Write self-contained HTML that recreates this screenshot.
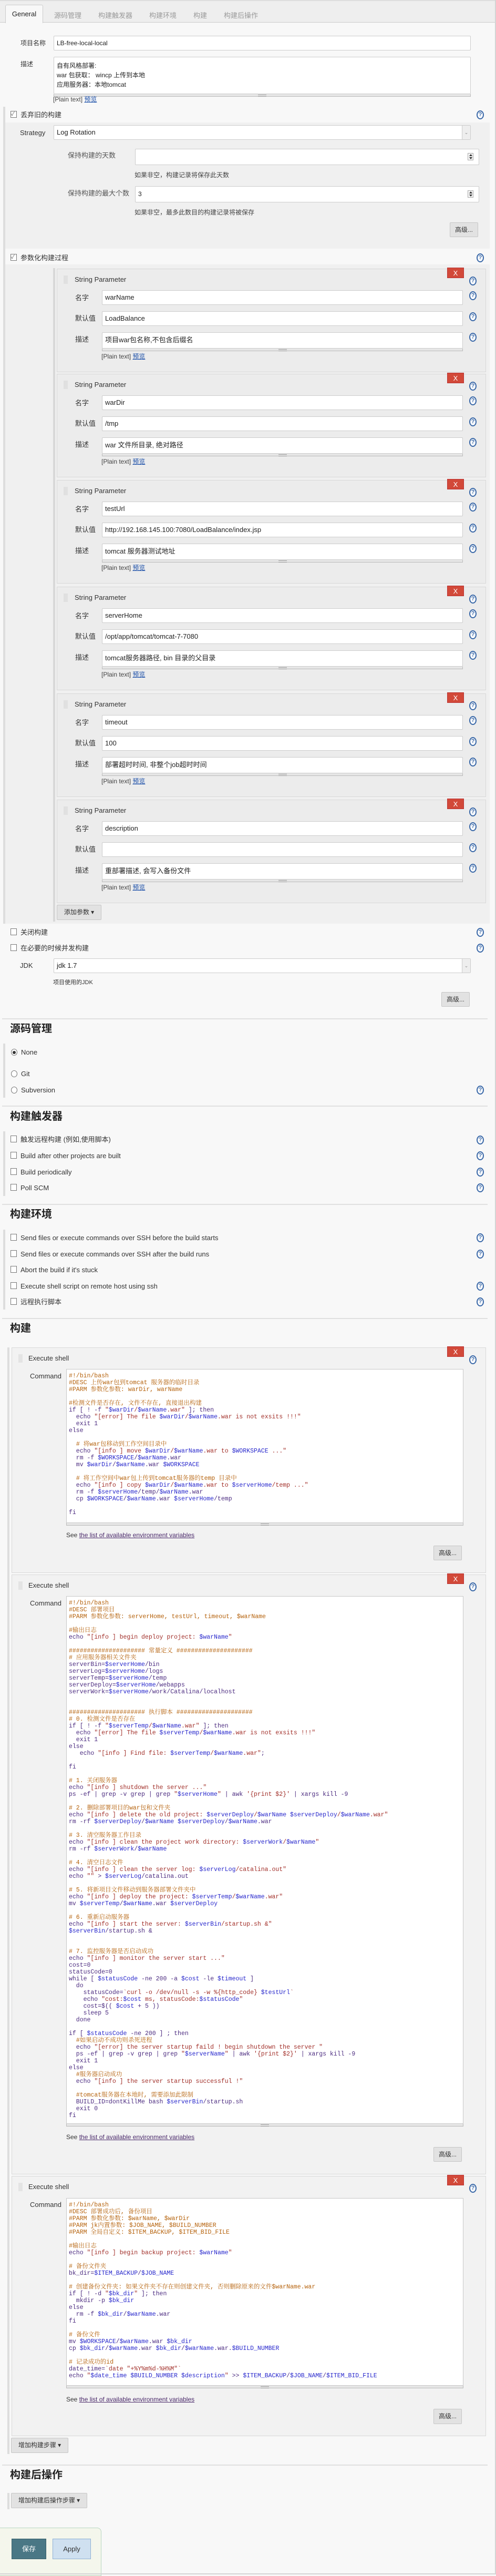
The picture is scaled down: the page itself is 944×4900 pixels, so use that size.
<!DOCTYPE html>
<html><head><meta charset="utf-8">
<style>
*{box-sizing:border-box;margin:0;padding:0}
body{width:944px;height:4897px;position:relative;background:#f8f8f8;font-family:"Liberation Sans","Noto Sans CJK SC",sans-serif;font-size:12px;color:#333;overflow:hidden}
.a{position:absolute}
.lbl{position:absolute;font-size:12px;color:#333;line-height:14px;transform:translateY(-7px);white-space:nowrap}
.inp{position:absolute;background:#fff;border:1px solid #ccc;border-radius:2px;font-size:12px;color:#222;padding-left:5px;white-space:nowrap;overflow:hidden}
.bar{position:absolute;height:5px;background:#e6e6e6;border:1px solid #bbb;border-top:none}
.bar:after{content:"";position:absolute;left:50%;top:1px;width:16px;margin-left:-8px;height:2px;border-top:1px solid #999;border-bottom:1px solid #999}
.help{position:absolute;width:14px;height:17px;border-radius:50%;border:2px solid #3b69a8;background:#fff;color:#3b69a8;font-weight:bold;font-size:11px;line-height:13px;text-align:center;transform:translateY(-8px)}
.cb{position:absolute;width:12px;height:13px;border:1px solid #777;background:#fff;transform:translateY(-7px)}
.rd{position:absolute;width:12px;height:13px;border:1px solid #777;border-radius:50%;background:#fff;transform:translateY(-7px)}
.btn{position:absolute;background:#e2e2e2;border:1px solid #c6c6c6;border-radius:2px;font-size:12px;color:#333;text-align:center;white-space:nowrap}
.xb{position:absolute;width:32px;height:20px;background:#d24939;border:1px solid #b33;color:#fff;text-align:center;font-size:13px;line-height:19px}
.hr{position:absolute;left:4px;width:924px;height:2px;background:#e0e0e0}
.h2{position:absolute;left:19px;font-size:20px;font-weight:bold;color:#222;line-height:24px;transform:translateY(-12px)}
.strip{position:absolute;width:4px;background:#ddd}
.pblk{position:absolute;left:108px;width:817px;height:197px;background:#ececec;border:1px solid #d8d8d8}
.handle{position:absolute;width:8px;height:16px;background-image:radial-gradient(#bbb 40%,transparent 45%);background-size:2px 2px}
.title{position:absolute;font-size:13px;color:#333;transform:translateY(-8px);line-height:16px}
.plain{position:absolute;font-size:12px;color:#444;transform:translateY(-7px);line-height:14px}
.plain u{color:#1a4ea8}
.eblk{position:absolute;left:22px;width:903px;background:#f2f2f2;border:1px solid #d8d8d8}
pre{position:absolute;left:126px;width:756px;background:#fff;border:1px solid #c8c8c8;font-family:"Liberation Mono","Noto Serif CJK SC",monospace;font-size:11.5px;line-height:13px;color:#4c2c80;padding:6px 4px 0 4px;overflow:hidden;white-space:pre}
.c{color:#b5620c}.s{color:#a2302a}.v{color:#2727cc}
.see{position:absolute;left:126px;font-size:12px;color:#333;transform:translateY(-7px);line-height:14px}
.see u{color:#4b2a6b}
.spin{position:absolute;width:11px;height:14px;border:1px solid #aaa;background:#f4f4f4}
.spin:before{content:"";position:absolute;left:2px;top:1px;border:3px solid transparent;border-bottom:4px solid #333;border-top:none}
.spin:after{content:"";position:absolute;left:2px;bottom:1px;border:3px solid transparent;border-top:4px solid #333;border-bottom:none}
</style></head><body>
<div class="a" style="left:942px;top:0;width:2px;height:4897px;background:#d4d4d4"></div>
<div class="a" style="left:0;top:0;width:942px;height:43px;background:#eee;border-bottom:1px solid #ccc;border-top:2px solid #ddd"></div>
<div class="a" style="left:10px;top:9px;width:72px;height:35px;background:#f8f8f8;border:1px solid #ccc;border-bottom:none;border-radius:3px 3px 0 0;text-align:center;line-height:34px;font-size:13px;color:#222">General</div>
<div class="a" style="left:103px;top:19px;font-size:13px;color:#999">源码管理</div>
<div class="a" style="left:187px;top:19px;font-size:13px;color:#999">构建触发器</div>
<div class="a" style="left:284px;top:19px;font-size:13px;color:#999">构建环境</div>
<div class="a" style="left:368px;top:19px;font-size:13px;color:#999">构建</div>
<div class="a" style="left:426px;top:19px;font-size:13px;color:#999">构建后操作</div>

<div class="lbl" style="left:39px;top:82px">项目名称</div>
<div class="inp" style="left:102px;top:68px;width:794px;height:28px;line-height:26px">LB-free-local-local</div>
<div class="lbl" style="left:39px;top:122px">描述</div>
<div class="inp" style="left:102px;top:108px;width:794px;height:71px;line-height:18px;padding-top:7px">自有风格部署:<br>war 包获取： wincp 上传到本地<br>应用服务器：本地tomcat</div>
<div class="bar" style="left:102px;top:179px;width:794px"></div>
<div class="plain" style="left:101px;top:189px">[Plain text] <u>预览</u></div>

<div class="strip" style="left:6px;top:203px;height:1554px"></div>
<div class="cb" style="left:20px;top:218px;font-size:10px;line-height:11px;color:#555">✓</div>
<div class="lbl" style="left:39px;top:219px;font-size:13px">丢弃旧的构建</div>
<div class="help" style="left:907px;top:218px">?</div>
<div class="a" style="left:10px;top:233px;width:922px;height:240px;background:#f0f0f0"></div>
<div class="lbl" style="left:38px;top:253px;font-size:13px">Strategy</div>
<div class="inp" style="left:102px;top:238px;width:794px;height:28px;line-height:26px;font-size:13px">Log Rotation</div>
<div class="a" style="left:879px;top:239px;width:16px;height:26px;background:#eee;border-left:1px solid #ccc;color:#888;font-size:9px;text-align:center;line-height:26px">⌄</div>
<div class="lbl" style="left:129px;top:296px;font-size:13px;color:#555">保持构建的天数</div>
<div class="inp" style="left:257px;top:283px;width:655px;height:31px"></div>
<div class="spin" style="left:890px;top:291px"></div>
<div class="lbl" style="left:256px;top:333px;color:#444">如果非空，构建记录将保存此天数</div>
<div class="lbl" style="left:129px;top:368px;font-size:13px;color:#555">保持构建的最大个数</div>
<div class="inp" style="left:257px;top:354px;width:655px;height:31px;line-height:29px">3</div>
<div class="spin" style="left:890px;top:362px"></div>
<div class="lbl" style="left:256px;top:404px;color:#444">如果非空，最多此数目的构建记录将被保存</div>
<div class="btn" style="left:856px;top:423px;width:54px;height:28px;line-height:26px">高级...</div>

<div class="cb" style="left:20px;top:490px;font-size:10px;line-height:11px;color:#555">✓</div>
<div class="lbl" style="left:39px;top:491px;font-size:13px">参数化构建过程</div>
<div class="help" style="left:907px;top:490px">?</div>
<div class="a" style="left:10px;top:503px;width:922px;height:1254px;background:#f0f0f0"></div>
<div class="strip" style="left:101px;top:510px;height:1243px;background:#d8d8d8"></div>

<div class="pblk" style="top:511px"></div>
<div class="handle" style="left:121px;top:524px"></div><div class="title" style="left:142px;top:532px">String Parameter</div>
<div class="xb" style="left:851px;top:509px">X</div>
<div class="help" style="left:893px;top:534px">?</div><div class="help" style="left:893px;top:562px">?</div><div class="help" style="left:893px;top:602px">?</div><div class="help" style="left:893px;top:641px">?</div>
<div class="lbl" style="left:143px;top:567px;font-size:13px">名字</div><div class="inp" style="left:194px;top:552px;width:687px;height:28px;line-height:26px;font-size:13px">warName</div>
<div class="lbl" style="left:143px;top:606px;font-size:13px">默认值</div><div class="inp" style="left:194px;top:592px;width:687px;height:28px;line-height:26px;font-size:13px">LoadBalance</div>
<div class="lbl" style="left:143px;top:646px;font-size:13px">描述</div><div class="inp" style="left:194px;top:632px;width:687px;height:31px;line-height:28px;font-size:13px">项目war包名称,不包含后缀名</div>
<div class="bar" style="left:194px;top:663px;width:687px"></div><div class="plain" style="left:193px;top:678px">[Plain text] <u>预览</u></div>

<div class="pblk" style="top:711px"></div>
<div class="handle" style="left:121px;top:724px"></div><div class="title" style="left:142px;top:732px">String Parameter</div>
<div class="xb" style="left:851px;top:709px">X</div>
<div class="help" style="left:893px;top:734px">?</div><div class="help" style="left:893px;top:762px">?</div><div class="help" style="left:893px;top:802px">?</div><div class="help" style="left:893px;top:841px">?</div>
<div class="lbl" style="left:143px;top:767px;font-size:13px">名字</div><div class="inp" style="left:194px;top:752px;width:687px;height:28px;line-height:26px;font-size:13px">warDir</div>
<div class="lbl" style="left:143px;top:806px;font-size:13px">默认值</div><div class="inp" style="left:194px;top:792px;width:687px;height:28px;line-height:26px;font-size:13px">/tmp</div>
<div class="lbl" style="left:143px;top:846px;font-size:13px">描述</div><div class="inp" style="left:194px;top:832px;width:687px;height:31px;line-height:28px;font-size:13px">war 文件所目录, 绝对路径</div>
<div class="bar" style="left:194px;top:863px;width:687px"></div><div class="plain" style="left:193px;top:878px">[Plain text] <u>预览</u></div>

<div class="pblk" style="top:913px"></div>
<div class="handle" style="left:121px;top:926px"></div><div class="title" style="left:142px;top:934px">String Parameter</div>
<div class="xb" style="left:851px;top:911px">X</div>
<div class="help" style="left:893px;top:936px">?</div><div class="help" style="left:893px;top:964px">?</div><div class="help" style="left:893px;top:1004px">?</div><div class="help" style="left:893px;top:1043px">?</div>
<div class="lbl" style="left:143px;top:969px;font-size:13px">名字</div><div class="inp" style="left:194px;top:954px;width:687px;height:28px;line-height:26px;font-size:13px">testUrl</div>
<div class="lbl" style="left:143px;top:1008px;font-size:13px">默认值</div><div class="inp" style="left:194px;top:994px;width:687px;height:28px;line-height:26px;font-size:13px">http://192.168.145.100:7080/LoadBalance/index.jsp</div>
<div class="lbl" style="left:143px;top:1048px;font-size:13px">描述</div><div class="inp" style="left:194px;top:1034px;width:687px;height:31px;line-height:28px;font-size:13px">tomcat 服务器测试地址</div>
<div class="bar" style="left:194px;top:1065px;width:687px"></div><div class="plain" style="left:193px;top:1080px">[Plain text] <u>预览</u></div>

<div class="pblk" style="top:1116px"></div>
<div class="handle" style="left:121px;top:1129px"></div><div class="title" style="left:142px;top:1137px">String Parameter</div>
<div class="xb" style="left:851px;top:1114px">X</div>
<div class="help" style="left:893px;top:1139px">?</div><div class="help" style="left:893px;top:1167px">?</div><div class="help" style="left:893px;top:1207px">?</div><div class="help" style="left:893px;top:1246px">?</div>
<div class="lbl" style="left:143px;top:1172px;font-size:13px">名字</div><div class="inp" style="left:194px;top:1157px;width:687px;height:28px;line-height:26px;font-size:13px">serverHome</div>
<div class="lbl" style="left:143px;top:1211px;font-size:13px">默认值</div><div class="inp" style="left:194px;top:1197px;width:687px;height:28px;line-height:26px;font-size:13px">/opt/app/tomcat/tomcat-7-7080</div>
<div class="lbl" style="left:143px;top:1251px;font-size:13px">描述</div><div class="inp" style="left:194px;top:1237px;width:687px;height:31px;line-height:28px;font-size:13px">tomcat服务器路径, bin 目录的父目录</div>
<div class="bar" style="left:194px;top:1268px;width:687px"></div><div class="plain" style="left:193px;top:1283px">[Plain text] <u>预览</u></div>

<div class="pblk" style="top:1319px"></div>
<div class="handle" style="left:121px;top:1332px"></div><div class="title" style="left:142px;top:1340px">String Parameter</div>
<div class="xb" style="left:851px;top:1317px">X</div>
<div class="help" style="left:893px;top:1342px">?</div><div class="help" style="left:893px;top:1370px">?</div><div class="help" style="left:893px;top:1410px">?</div><div class="help" style="left:893px;top:1449px">?</div>
<div class="lbl" style="left:143px;top:1375px;font-size:13px">名字</div><div class="inp" style="left:194px;top:1360px;width:687px;height:28px;line-height:26px;font-size:13px">timeout</div>
<div class="lbl" style="left:143px;top:1414px;font-size:13px">默认值</div><div class="inp" style="left:194px;top:1400px;width:687px;height:28px;line-height:26px;font-size:13px">100</div>
<div class="lbl" style="left:143px;top:1454px;font-size:13px">描述</div><div class="inp" style="left:194px;top:1440px;width:687px;height:31px;line-height:28px;font-size:13px">部署超时时间, 非整个job超时时间</div>
<div class="bar" style="left:194px;top:1471px;width:687px"></div><div class="plain" style="left:193px;top:1486px">[Plain text] <u>预览</u></div>

<div class="pblk" style="top:1521px"></div>
<div class="handle" style="left:121px;top:1534px"></div><div class="title" style="left:142px;top:1542px">String Parameter</div>
<div class="xb" style="left:851px;top:1519px">X</div>
<div class="help" style="left:893px;top:1544px">?</div><div class="help" style="left:893px;top:1572px">?</div><div class="help" style="left:893px;top:1612px">?</div><div class="help" style="left:893px;top:1651px">?</div>
<div class="lbl" style="left:143px;top:1577px;font-size:13px">名字</div><div class="inp" style="left:194px;top:1562px;width:687px;height:28px;line-height:26px;font-size:13px">description</div>
<div class="lbl" style="left:143px;top:1616px;font-size:13px">默认值</div><div class="inp" style="left:194px;top:1602px;width:687px;height:28px;line-height:26px;font-size:13px"></div>
<div class="lbl" style="left:143px;top:1656px;font-size:13px">描述</div><div class="inp" style="left:194px;top:1642px;width:687px;height:31px;line-height:28px;font-size:13px">重部署描述, 会写入备份文件</div>
<div class="bar" style="left:194px;top:1673px;width:687px"></div><div class="plain" style="left:193px;top:1688px">[Plain text] <u>预览</u></div>

<div class="btn" style="left:108px;top:1721px;width:85px;height:29px;line-height:27px">添加参数 ▾</div>

<div class="cb" style="left:20px;top:1773px"></div><div class="lbl" style="left:39px;top:1774px;font-size:13px">关闭构建</div><div class="help" style="left:907px;top:1773px">?</div>
<div class="cb" style="left:20px;top:1803px"></div><div class="lbl" style="left:39px;top:1804px;font-size:13px">在必要的时候并发构建</div><div class="help" style="left:907px;top:1803px">?</div>
<div class="lbl" style="left:38px;top:1837px;font-size:13px">JDK</div>
<div class="inp" style="left:102px;top:1823px;width:794px;height:28px;line-height:26px;font-size:13px">jdk 1.7</div>
<div class="a" style="left:879px;top:1824px;width:16px;height:26px;background:#eee;border-left:1px solid #ccc;color:#888;font-size:9px;text-align:center;line-height:26px">⌄</div>
<div class="lbl" style="left:101px;top:1869px;font-size:11px">项目使用的JDK</div>
<div class="btn" style="left:840px;top:1887px;width:54px;height:28px;line-height:26px">高级...</div>

<div class="hr" style="top:1937px"></div>
<div class="h2" style="top:1957px">源码管理</div>
<div class="strip" style="left:6px;top:1985px;height:103px"></div>
<div class="rd" style="left:21px;top:2002px"><div style="width:6px;height:6px;border-radius:50%;background:#333;margin:2.5px auto"></div></div><div class="lbl" style="left:40px;top:2002px;font-size:13px">None</div>
<div class="rd" style="left:21px;top:2043px"></div><div class="lbl" style="left:40px;top:2043px;font-size:13px">Git</div>
<div class="rd" style="left:21px;top:2074px"></div><div class="lbl" style="left:40px;top:2074px;font-size:13px">Subversion</div><div class="help" style="left:907px;top:2073px">?</div>

<div class="hr" style="top:2103px"></div>
<div class="h2" style="top:2124px">构建触发器</div>
<div class="strip" style="left:6px;top:2152px;height:123px"></div>
<div class="cb" style="left:20px;top:2167px"></div><div class="lbl" style="left:39px;top:2168px;font-size:13px">触发远程构建 (例如,使用脚本)</div><div class="help" style="left:907px;top:2168px">?</div>
<div class="cb" style="left:20px;top:2198px"></div><div class="lbl" style="left:39px;top:2199px;font-size:13px">Build after other projects are built</div><div class="help" style="left:907px;top:2198px">?</div>
<div class="cb" style="left:20px;top:2229px"></div><div class="lbl" style="left:39px;top:2230px;font-size:13px">Build periodically</div><div class="help" style="left:907px;top:2229px">?</div>
<div class="cb" style="left:20px;top:2259px"></div><div class="lbl" style="left:39px;top:2260px;font-size:13px">Poll SCM</div><div class="help" style="left:907px;top:2259px">?</div>

<div class="hr" style="top:2290px"></div>
<div class="h2" style="top:2310px">构建环境</div>
<div class="strip" style="left:6px;top:2339px;height:152px"></div>
<div class="cb" style="left:20px;top:2354px"></div><div class="lbl" style="left:39px;top:2355px;font-size:13px">Send files or execute commands over SSH before the build starts</div><div class="help" style="left:907px;top:2354px">?</div>
<div class="cb" style="left:20px;top:2385px"></div><div class="lbl" style="left:39px;top:2386px;font-size:13px">Send files or execute commands over SSH after the build runs</div><div class="help" style="left:907px;top:2385px">?</div>
<div class="cb" style="left:20px;top:2415px"></div><div class="lbl" style="left:39px;top:2416px;font-size:13px">Abort the build if it's stuck</div>
<div class="cb" style="left:20px;top:2446px"></div><div class="lbl" style="left:39px;top:2447px;font-size:13px">Execute shell script on remote host using ssh</div><div class="help" style="left:907px;top:2446px">?</div>
<div class="cb" style="left:20px;top:2476px"></div><div class="lbl" style="left:39px;top:2477px;font-size:13px">远程执行脚本</div><div class="help" style="left:907px;top:2476px">?</div>

<div class="hr" style="top:2507px"></div>
<div class="h2" style="top:2527px">构建</div>
<div class="strip" style="left:14px;top:2563px;height:2105px"></div>

<div class="eblk" style="top:2563px;height:429px"></div>
<div class="handle" style="left:35px;top:2576px"></div><div class="title" style="left:54px;top:2584px">Execute shell</div>
<div class="xb" style="left:851px;top:2561px">X</div><div class="help" style="left:893px;top:2586px">?</div>
<div class="lbl" style="left:57px;top:2618px;font-size:13px">Command</div>
<pre style="top:2604px;height:293px"><span class="c">#!/bin/bash
#DESC 上传war包到tomcat 服务器的临时目录
#PARM 参数化参数: warDir, warName</span>

<span class="c">#检测文件是否存在, 文件不存在, 直接退出构建</span>
if [ ! -f <span class="s">"<span class="v">$warDir</span>/<span class="v">$warName</span>.war"</span> ]; then
  echo <span class="s">"[error] The file <span class="v">$warDir</span>/<span class="v">$warName</span>.war is not exsits !!!"</span>
  exit 1
else

  <span class="c"># 将war包移动到工作空间目录中</span>
  echo <span class="s">"[info ] move <span class="v">$warDir</span>/<span class="v">$warName</span>.war to <span class="v">$WORKSPACE</span> ..."</span>
  rm -f <span class="v">$WORKSPACE</span>/<span class="v">$warName</span>.war
  mv <span class="v">$warDir</span>/<span class="v">$warName</span>.war <span class="v">$WORKSPACE</span>

  <span class="c"># 将工作空间中war包上传到tomcat服务器的temp 目录中</span>
  echo <span class="s">"[info ] copy <span class="v">$warDir</span>/<span class="v">$warName</span>.war to <span class="v">$serverHome</span>/temp ..."</span>
  rm -f <span class="v">$serverHome</span>/temp/<span class="v">$warName</span>.war
  cp <span class="v">$WORKSPACE</span>/<span class="v">$warName</span>.war <span class="v">$serverHome</span>/temp

fi</pre>
<div class="bar" style="left:126px;top:2897px;width:756px"></div>
<div class="see" style="top:2920px">See <u>the list of available environment variables</u></div>
<div class="btn" style="left:825px;top:2940px;width:54px;height:28px;line-height:26px">高级...</div>

<div class="eblk" style="top:2995px;height:1141px"></div>
<div class="handle" style="left:35px;top:3008px"></div><div class="title" style="left:54px;top:3016px">Execute shell</div>
<div class="xb" style="left:851px;top:2993px">X</div><div class="help" style="left:893px;top:3018px">?</div>
<div class="lbl" style="left:57px;top:3050px;font-size:13px">Command</div>
<pre style="top:3036px;height:1004px"><span class="c">#!/bin/bash
#DESC 部署项目
#PARM 参数化参数: serverHome, testUrl, timeout, $warName</span>

<span class="c">#输出日志</span>
echo <span class="s">"[info ] begin deploy project: <span class="v">$warName</span>"</span>

<span class="c">##################### 常量定义 #####################
# 应用服务器相关文件夹</span>
serverBin=<span class="v">$serverHome</span>/bin
serverLog=<span class="v">$serverHome</span>/logs
serverTemp=<span class="v">$serverHome</span>/temp
serverDeploy=<span class="v">$serverHome</span>/webapps
serverWork=<span class="v">$serverHome</span>/work/Catalina/localhost


<span class="c">##################### 执行脚本 #####################
# 0. 检测文件是否存在</span>
if [ ! -f <span class="s">"<span class="v">$serverTemp</span>/<span class="v">$warName</span>.war"</span> ]; then
  echo <span class="s">"[error] The file <span class="v">$serverTemp</span>/<span class="v">$warName</span>.war is not exsits !!!"</span>
  exit 1
else
   echo <span class="s">"[info ] Find file: <span class="v">$serverTemp</span>/<span class="v">$warName</span>.war"</span>;

fi

<span class="c"># 1. 关闭服务器</span>
echo <span class="s">"[info ] shutdown the server ..."</span>
ps -ef | grep -v grep | grep <span class="s">"<span class="v">$serverHome</span>"</span> | awk <span class="s">'{print $2}'</span> | xargs kill -9

<span class="c"># 2. 删除部署项目的war包和文件夹</span>
echo <span class="s">"[info ] delete the old project: <span class="v">$serverDeploy</span>/<span class="v">$warName</span> <span class="v">$serverDeploy</span>/<span class="v">$warName</span>.war"</span>
rm -rf <span class="v">$serverDeploy</span>/<span class="v">$warName</span> <span class="v">$serverDeploy</span>/<span class="v">$warName</span>.war

<span class="c"># 3. 清空服务器工作目录</span>
echo <span class="s">"[info ] clean the project work directory: <span class="v">$serverWork</span>/<span class="v">$warName</span>"</span>
rm -rf <span class="v">$serverWork</span>/<span class="v">$warName</span>

<span class="c"># 4. 清空日志文件</span>
echo <span class="s">"[info ] clean the server log: <span class="v">$serverLog</span>/catalina.out"</span>
echo <span class="s">""</span> &gt; <span class="v">$serverLog</span>/catalina.out

<span class="c"># 5. 将新项目文件移动到服务器部署文件夹中</span>
echo <span class="s">"[info ] deploy the project: <span class="v">$serverTemp</span>/<span class="v">$warName</span>.war"</span>
mv <span class="v">$serverTemp</span>/<span class="v">$warName</span>.war <span class="v">$serverDeploy</span>

<span class="c"># 6. 重新启动服务器</span>
echo <span class="s">"[info ] start the server: <span class="v">$serverBin</span>/startup.sh &amp;"</span>
<span class="v">$serverBin</span>/startup.sh &amp;


<span class="c"># 7. 监控服务器是否启动成功</span>
echo <span class="s">"[info ] monitor the server start ..."</span>
cost=0
statusCode=0
while [ <span class="v">$statusCode</span> -ne 200 -a <span class="v">$cost</span> -le <span class="v">$timeout</span> ]
  do
    statusCode=<span class="s">`curl -o /dev/null -s -w %{http_code} <span class="v">$testUrl</span>`</span>
    echo <span class="s">"cost:<span class="v">$cost</span> ms, statusCode:<span class="v">$statusCode</span>"</span>
    cost=$(( <span class="v">$cost</span> + 5 ))
    sleep 5
  done

if [ <span class="v">$statusCode</span> -ne 200 ] ; then
  <span class="c">#如果启动不成功则杀死进程</span>
  echo <span class="s">"[error] the server startup faild ! begin shutdown the server "</span>
  ps -ef | grep -v grep | grep <span class="s">"<span class="v">$serverName</span>"</span> | awk <span class="s">'{print $2}'</span> | xargs kill -9
  exit 1
else
  <span class="c">#服务器启动成功</span>
  echo <span class="s">"[info ] the server startup successful !"</span>

  <span class="c">#tomcat服务器在本地时, 需要添加此限制</span>
  BUILD_ID=dontKillMe bash <span class="v">$serverBin</span>/startup.sh
  exit 0
fi</pre>
<div class="bar" style="left:126px;top:4040px;width:756px"></div>
<div class="see" style="top:4065px">See <u>the list of available environment variables</u></div>
<div class="btn" style="left:825px;top:4084px;width:54px;height:28px;line-height:26px">高级...</div>

<div class="eblk" style="top:4139px;height:495px"></div>
<div class="handle" style="left:35px;top:4152px"></div><div class="title" style="left:54px;top:4160px">Execute shell</div>
<div class="xb" style="left:851px;top:4137px">X</div><div class="help" style="left:893px;top:4162px">?</div>
<div class="lbl" style="left:57px;top:4194px;font-size:13px">Command</div>
<pre style="top:4181px;height:357px"><span class="c">#!/bin/bash
#DESC 部署成功后, 备份项目
#PARM 参数化参数: $warName, $warDir
#PARM jk内置参数: $JOB_NAME, $BUILD_NUMBER
#PARM 全局自定义: $ITEM_BACKUP, $ITEM_BID_FILE</span>

<span class="c">#输出日志</span>
echo <span class="s">"[info ] begin backup project: <span class="v">$warName</span>"</span>

<span class="c"># 备份文件夹</span>
bk_dir=<span class="v">$ITEM_BACKUP</span>/<span class="v">$JOB_NAME</span>

<span class="c"># 创建备份文件夹: 如果文件夹不存在则创建文件夹, 否则删除原来的文件$warName.war</span>
if [ ! -d <span class="s">"<span class="v">$bk_dir</span>"</span> ]; then
  mkdir -p <span class="v">$bk_dir</span>
else
  rm -f <span class="v">$bk_dir</span>/<span class="v">$warName</span>.war
fi

<span class="c"># 备份文件</span>
mv <span class="v">$WORKSPACE</span>/<span class="v">$warName</span>.war <span class="v">$bk_dir</span>
cp <span class="v">$bk_dir</span>/<span class="v">$warName</span>.war <span class="v">$bk_dir</span>/<span class="v">$warName</span>.war.<span class="v">$BUILD_NUMBER</span>

<span class="c"># 记录成功的id</span>
date_time=<span class="s">`date "+%Y%m%d-%H%M"`</span>
echo <span class="s">"<span class="v">$date_time</span> <span class="v">$BUILD_NUMBER</span> <span class="v">$description</span>"</span> &gt;&gt; <span class="v">$ITEM_BACKUP</span>/<span class="v">$JOB_NAME</span>/<span class="v">$ITEM_BID_FILE</span></pre>
<div class="bar" style="left:126px;top:4538px;width:756px"></div>
<div class="see" style="top:4564px">See <u>the list of available environment variables</u></div>
<div class="btn" style="left:825px;top:4582px;width:54px;height:29px;line-height:27px">高级...</div>

<div class="btn" style="left:21px;top:4637px;width:109px;height:29px;line-height:27px">增加构建步骤 ▾</div>
<div class="hr" style="top:4688px"></div>
<div class="h2" style="top:4708px">构建后操作</div>
<div class="strip" style="left:14px;top:4742px;height:31px"></div>
<div class="btn" style="left:21px;top:4742px;width:145px;height:29px;line-height:27px">增加构建后操作步骤 ▾</div>

<div class="a" style="left:-2px;top:4808px;width:195px;height:92px;background:#f4f6ec;border:1px solid #b8d6c0;border-radius:0 8px 0 0"></div>
<div class="a" style="left:22px;top:4829px;width:66px;height:39px;background:#4a7785;border:1px solid #37606c;color:#fff;text-align:center;line-height:37px;font-size:13px">保存</div>
<div class="a" style="left:100px;top:4829px;width:73px;height:39px;background:#cfe0f0;border:1px solid #8fb0d4;color:#333;text-align:center;line-height:37px;font-size:13px">Apply</div>
<div class="a" style="left:0;top:4895px;width:944px;height:2px;background:#d4d4d4"></div>
</body></html>
